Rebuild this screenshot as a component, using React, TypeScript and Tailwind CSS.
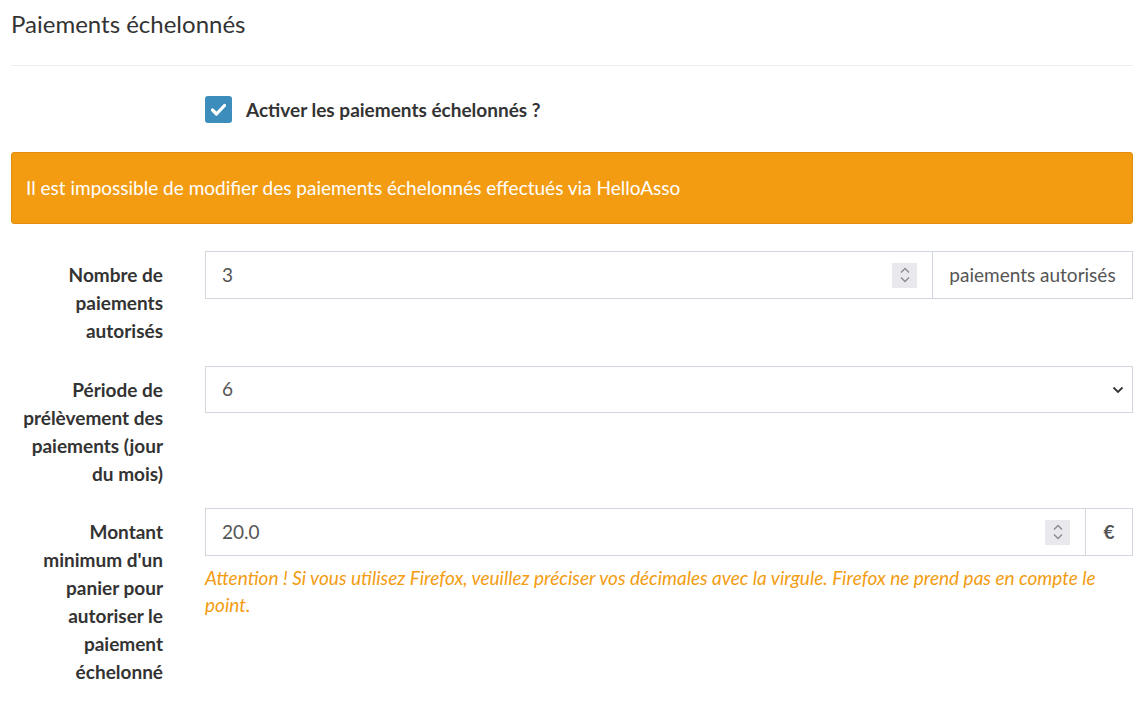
import React from "react";

const Spinner = () => (
  <span className="flex h-[25px] w-[25px] flex-col items-center justify-center bg-[#e9e9ed]">
    <svg width="12" height="20" viewBox="0 0 12 20" fill="none" stroke="#8a8a95" strokeWidth="1.4">
      <path d="M2 7.5 L6 3.5 L10 7.5" />
      <path d="M2 12.5 L6 16.5 L10 12.5" />
    </svg>
  </span>
);

const Label = ({ children }: { children: React.ReactNode }) => (
  <label className="w-[152px] shrink-0 whitespace-nowrap pt-[10px] text-right text-[19px] font-bold leading-[28px] text-[#333]">
    {children}
  </label>
);

export default function App() {
  return (
    <div
      className="min-h-[704px] w-full bg-white px-[11px] pr-[8px] text-[#333]"
      style={{ fontFamily: "Lato, 'Open Sans', sans-serif" }}
    >
      <h3 className="pt-[9px] text-[24px] leading-[30px] font-normal text-[#333]">
        Paiements échelonnés
      </h3>
      <hr className="mt-[26px] border-t border-[#eeeeee]" />

      <div className="mt-[30px] flex items-center gap-[14px] pl-[194px] leading-[27px]">
        <span className="flex h-[27px] w-[27px] items-center justify-center rounded-[3px] bg-[#3c8dbc]">
          <svg width="15" height="13" viewBox="0 0 15 13">
            <path
              d="M1.5 7 L5.5 11 L13.5 2.5"
              fill="none"
              stroke="#fff"
              strokeWidth="3.2"
              strokeLinecap="round"
              strokeLinejoin="round"
            />
          </svg>
        </span>
        <span className="text-[19px] font-bold leading-[27px] text-[#333]">Activer les paiements échelonnés ?</span>
      </div>

      <div className="mt-[29px] flex h-[72px] items-center rounded-[3px] border border-[#e08e0b] bg-[#f39c12] px-[14px] text-[19px] text-white">
        Il est impossible de modifier des paiements échelonnés effectués via HelloAsso
      </div>

      {/* Nombre de paiements */}
      <div className="mt-[27px] flex gap-[42px]">
        <Label>
          Nombre de
          <br />
          paiements
          <br />
          autorisés
        </Label>
        <div className="flex h-[48px] flex-1 border border-[#d2d6de]">
          <div className="flex flex-1 items-center justify-between pl-[16px] pr-[15px] text-[19px] text-[#555]">
            <span>3</span>
            <Spinner />
          </div>
          <div className="flex w-[200px] items-center justify-center border-l border-[#d2d6de] text-[19px] text-[#555]">
            paiements autorisés
          </div>
        </div>
      </div>

      {/* Période */}
      <div className="mt-[21px] flex gap-[42px]">
        <Label>
          Période de
          <br />
          prélèvement des
          <br />
          paiements (jour
          <br />
          du mois)
        </Label>
        <div className="flex h-[47px] flex-1 items-center justify-between border border-[#d2d6de] pl-[16px] pr-[8px] text-[19px] text-[#555]">
          <span>6</span>
          <svg width="12" height="8" viewBox="0 0 12 8" fill="none" stroke="#333" strokeWidth="1.8">
            <path d="M1.5 1.5 L6 6 L10.5 1.5" />
          </svg>
        </div>
      </div>

      {/* Montant minimum */}
      <div className="mt-[20px] flex gap-[42px]">
        <Label>
          Montant
          <br />
          minimum d'un
          <br />
          panier pour
          <br />
          autoriser le
          <br />
          paiement
          <br />
          échelonné
        </Label>
        <div className="flex-1">
          <div className="flex h-[48px] border border-[#d2d6de]">
            <div className="flex flex-1 items-center justify-between pl-[16px] pr-[15px] text-[19px] text-[#555]">
              <span>20.0</span>
              <Spinner />
            </div>
            <div className="flex w-[47px] items-center justify-center border-l border-[#d2d6de] text-[19px] font-bold text-[#555]">
              €
            </div>
          </div>
          <p className="mt-[8px] text-[19px] leading-[27px] italic text-[#f39c12]">
            Attention ! Si vous utilisez Firefox, veuillez préciser vos décimales avec la virgule. Firefox ne prend pas en compte le
            <br />
            point.
          </p>
        </div>
      </div>
    </div>
  );
}
